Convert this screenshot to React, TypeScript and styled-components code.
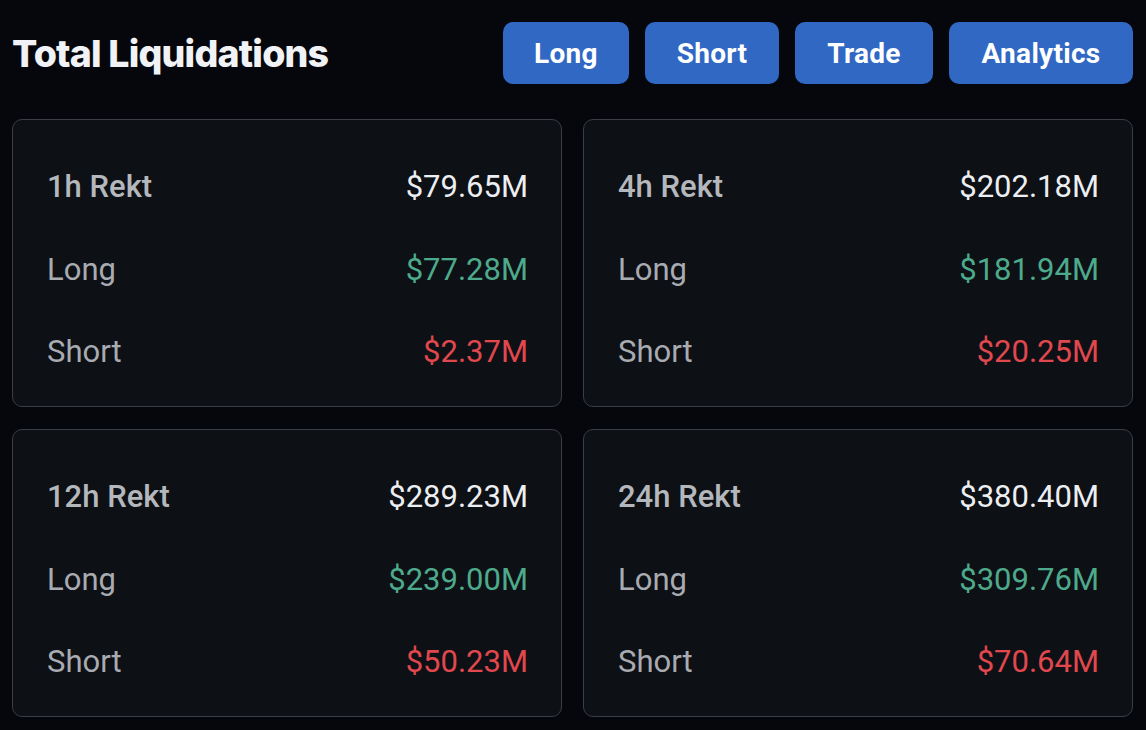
import React from "react";
import styled, { createGlobalStyle } from "styled-components";

const Global = createGlobalStyle`
  html, body { margin: 0; padding: 0; background: #05070c; }
  body { font-family: "Roboto", "Noto Sans", sans-serif; }
`;

const Page = styled.div`
  width: 1146px;
  height: 730px;
  box-sizing: border-box;
  padding: 22px 13px 0 12px;
  background: #05070c;
`;

const Header = styled.div`
  display: flex;
  align-items: center;
  justify-content: space-between;
  height: 62px;
`;

const Title = styled.h1`
  margin: 0;
  font-family: "Inter", sans-serif;
  font-weight: 800;
  font-size: 37.5px;
  letter-spacing: -0.8px;
  color: #f1f2f5;
`;

const Buttons = styled.div`
  display: flex;
  gap: 16px;
`;

const Button = styled.button<{ $w: number }>`
  width: ${(p) => p.$w}px;
  height: 62px;
  padding: 0;
  border: none;
  border-radius: 10px;
  background: #3068c4;
  color: #ffffff;
  font-family: "Roboto", sans-serif;
  font-weight: 700;
  font-size: 28px;
  letter-spacing: 0.3px;
  cursor: pointer;
`;

const Grid = styled.div`
  display: grid;
  grid-template-columns: 550px 550px;
  column-gap: 21px;
  row-gap: 22px;
  margin-top: 35px;
`;

const Card = styled.div`
  height: 288px;
  box-sizing: border-box;
  border: 1.5px solid #3a3d43;
  border-radius: 10px;
  background: #0d1015;
  padding: 25.5px 33px 14px 34px;
  display: flex;
  flex-direction: column;
`;

const Row = styled.div`
  height: 82.5px;
  flex: none;
  display: flex;
  align-items: center;
  justify-content: space-between;
  font-family: "Roboto", sans-serif;
  font-size: 31px;
`;

const Label = styled.span<{ $head?: boolean }>`
  color: ${(p) => (p.$head ? "#b4b7bc" : "#a8abb1")};
  font-weight: ${(p) => (p.$head ? 500 : 400)};
`;

const Value = styled.span<{ $tone: "total" | "long" | "short" }>`
  color: ${(p) =>
    p.$tone === "long" ? "#4daa8b" : p.$tone === "short" ? "#e0484e" : "#eceef1"};
  font-weight: 400;
`;

const data = [
  { label: "1h Rekt", total: "$79.65M", long: "$77.28M", short: "$2.37M" },
  { label: "4h Rekt", total: "$202.18M", long: "$181.94M", short: "$20.25M" },
  { label: "12h Rekt", total: "$289.23M", long: "$239.00M", short: "$50.23M" },
  { label: "24h Rekt", total: "$380.40M", long: "$309.76M", short: "$70.64M" },
];

export default function App() {
  return (
    <>
      <Global />
      <Page>
        <Header>
          <Title>Total Liquidations</Title>
          <Buttons>
            <Button $w={126}>Long</Button>
            <Button $w={134}>Short</Button>
            <Button $w={138}>Trade</Button>
            <Button $w={184}>Analytics</Button>
          </Buttons>
        </Header>
        <Grid>
          {data.map((d) => (
            <Card key={d.label}>
              <Row>
                <Label $head>{d.label}</Label>
                <Value $tone="total">{d.total}</Value>
              </Row>
              <Row>
                <Label>Long</Label>
                <Value $tone="long">{d.long}</Value>
              </Row>
              <Row>
                <Label>Short</Label>
                <Value $tone="short">{d.short}</Value>
              </Row>
            </Card>
          ))}
        </Grid>
      </Page>
    </>
  );
}
